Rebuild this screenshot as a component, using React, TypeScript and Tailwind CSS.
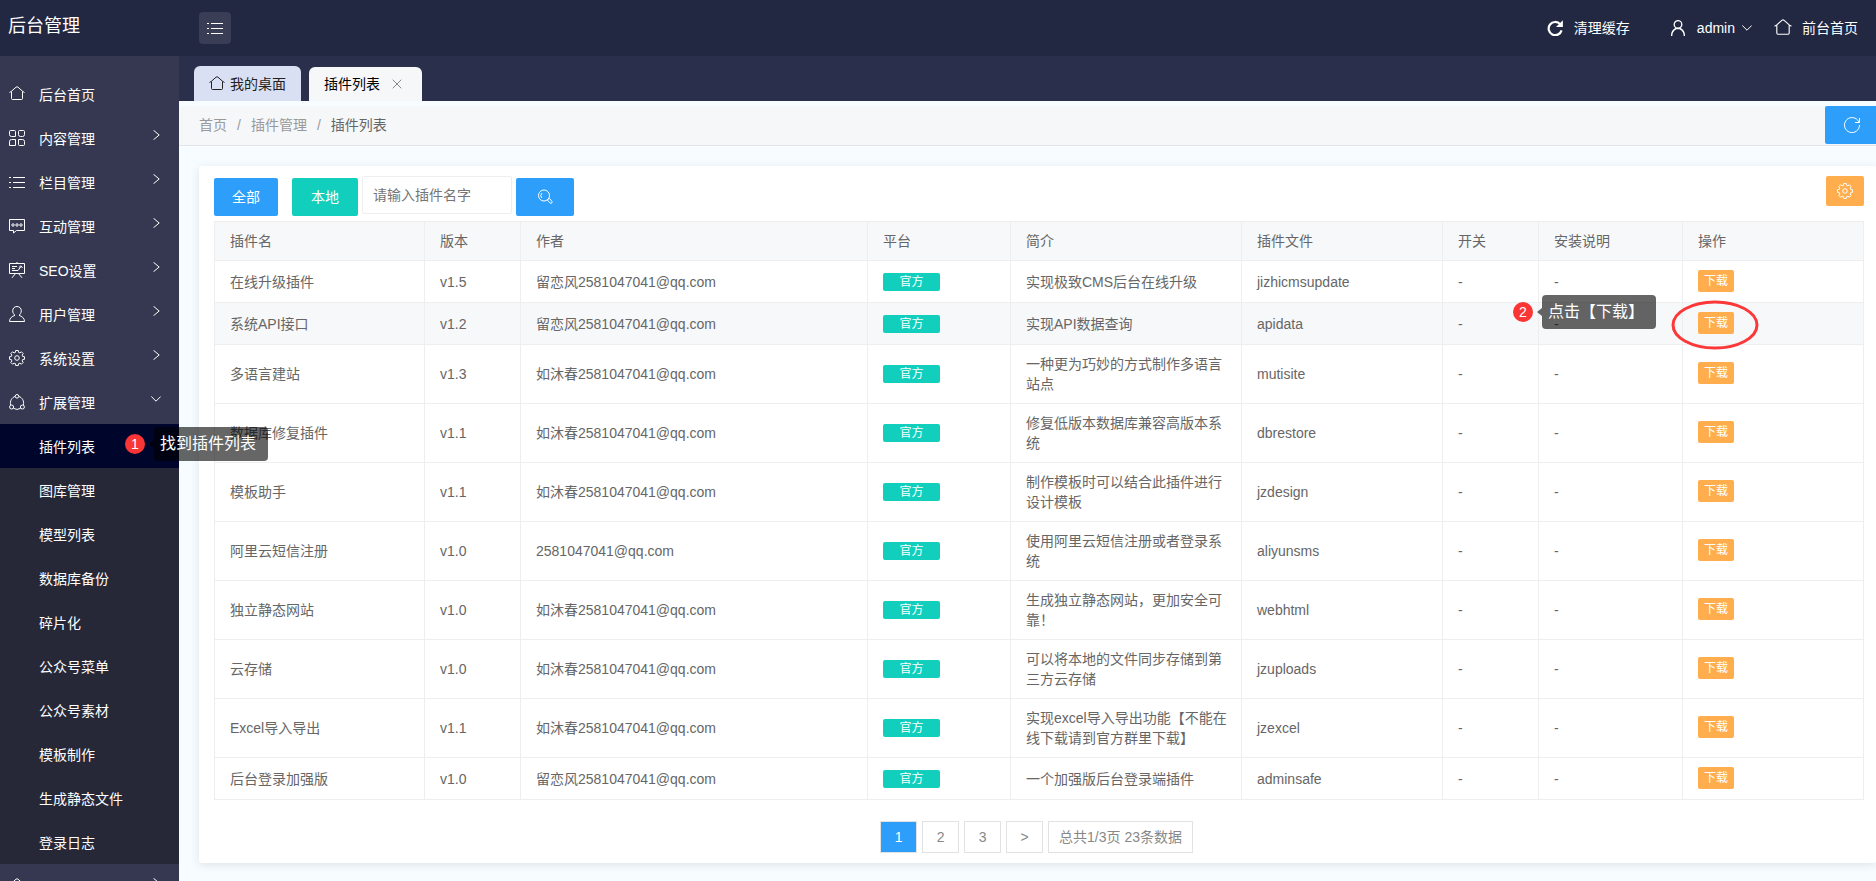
import React from 'react';

type IconProps = { className?: string };

const Svg = ({ className = 'size-4', children }: IconProps & { children: React.ReactNode }) => (
  <svg viewBox="0 0 16 16" className={`shrink-0 ${className}`} fill="none" stroke="currentColor" strokeWidth="1" aria-hidden="true">
    {children}
  </svg>
);

const HomeIcon = ({ className }: IconProps) => (
  <Svg className={className}>
    <path d="M.5 6.5 L2.5 5.2 L7 1.2 Q8 .4 9 1.2 L13.5 5.2 L15.5 6.5 M2.5 5.5 V12.5 Q2.5 13.5 3.5 13.5 H12.5 Q13.5 13.5 13.5 12.5 V5.5" />
  </Svg>
);

const GridIcon = ({ className }: IconProps) => (
  <Svg className={className}>
    <path d="M1.5 .5 H5.5 Q6.5 .5 6.5 1.5 V6.5 H2.5 Q.5 6.5 .5 4.5 V1.5 Q.5 .5 1.5 .5 Z" />
    <path d="M10.5 .5 H14.5 Q15.5 .5 15.5 1.5 V4.5 Q15.5 6.5 13.5 6.5 H11.5 Q9.5 6.5 9.5 4.5 V1.5 Q9.5 .5 10.5 .5 Z" />
    <path d="M2.5 9.5 H6.5 V15.5 H.5 V11.5 Q.5 9.5 2.5 9.5 Z" />
    <path d="M9.5 9.5 H13.5 Q15.5 9.5 15.5 11.5 V14.5 Q15.5 15.5 14.5 15.5 H10.5 Q9.5 15.5 9.5 14.5 Z" />
  </Svg>
);

const ListIcon = ({ className }: IconProps) => (
  <Svg className={className}>
    <path d="M0 3.5 H2 M4 3.5 H16 M0 8.5 H2 M4 8.5 H16 M0 13.5 H2 M4 13.5 H16" />
  </Svg>
);

const MessageIcon = ({ className }: IconProps) => (
  <Svg className={className}>
    <path d="M.5 1.5 H15.5 V12.5 H7.5 L4.5 15 V12.5 H.5 Z" />
    <circle cx="4" cy="7" r="1.2" />
    <circle cx="8" cy="7" r="1.2" />
    <circle cx="12" cy="7" r="1.2" />
  </Svg>
);

const BoardIcon = ({ className }: IconProps) => (
  <Svg className={className}>
    <path d="M.5 1.5 H15.5 V11.5 H.5 Z M8 0 V1.5 M3 4.5 H8 M3 6.5 H6 M3 8.5 H9 L12 4.5 M9.8 5.5 L12 3.8 L13.5 6 M6.5 11.5 L3 15.8 M9.5 11.5 L13 15.8" />
  </Svg>
);

const UserIcon = ({ className }: IconProps) => (
  <Svg className={className}>
    <path d="M8 .5 C10.5 .5 12.3 2.3 12.3 4.8 C12.3 6.8 11.3 8.3 10 9.3 C13 10.5 15.5 12 15.5 15.5 H.5 C.5 12 3 10.5 6 9.3 C4.7 8.3 3.7 6.8 3.7 4.8 C3.7 2.3 5.5 .5 8 .5 Z" />
  </Svg>
);

const polar = (r: number, deg: number) => {
  const a = (deg * Math.PI) / 180;
  return `${(8 + r * Math.sin(a)).toFixed(2)} ${(8 - r * Math.cos(a)).toFixed(2)}`;
};

// eight teeth around the rim
const gearRim = [0, 45, 90, 135, 180, 225, 270, 315]
  .map((a) => `${polar(7.6, a - 10)} L${polar(7.6, a + 10)} L${polar(5.9, a + 15)} L${polar(5.9, a + 30)}`)
  .join(' L');

const GearIcon = ({ className }: IconProps) => (
  <Svg className={className}>
    <path d={`M${gearRim} Z`} strokeLinejoin="round" />
    <circle cx="8" cy="8" r="2.3" />
  </Svg>
);

const ExtendIcon = ({ className }: IconProps) => (
  <Svg className={className}>
    <circle cx="8" cy="2.3" r="1.8" />
    <circle cx="2.6" cy="13" r="2" />
    <circle cx="13.4" cy="13" r="2" />
    <path d="M6.2 2.4 C2.6 3.6 .8 7 1.6 11 M9.8 2.4 C13.4 3.6 15.2 7 14.4 11 M4.4 14.4 Q8 16.4 11.6 14.4" />
  </Svg>
);

const AccountIcon = ({ className }: IconProps) => (
  <Svg className={className}>
    <circle cx="8" cy="4.4" r="3.8" strokeWidth="1.3" />
    <path d="M1.6 16 C1.6 12.5 3 10 6 8.5 H10 C13 10 14.4 12.5 14.4 16" strokeWidth="1.4" />
  </Svg>
);

const CleanIcon = ({ className }: IconProps) => (
  <Svg className={className}>
    <path d="M13.2 4.2 A6.6 6.6 0 1 0 14.6 10.4" strokeWidth="2.2" />
    <path d="M15.9 .2 V7 H9 Z" fill="currentColor" stroke="none" />
  </Svg>
);

const ReloadIcon = ({ className }: IconProps) => (
  <Svg className={className}>
    <path d="M15.5 8 A7.5 7.5 0 1 1 13.8 3.3 L15 5 M15.5 1 V5.5 H11" />
  </Svg>
);

const SearchIcon = ({ className }: IconProps) => (
  <Svg className={className}>
    <circle cx="7" cy="6.5" r="5.5" />
    <path d="M4.8 9 A3.6 3.6 0 0 1 4.8 4.2" />
    <path d="M11 10 L12.4 9.4 L15 12.4 Q15.4 14.6 13.4 14.3 L10.4 11.2 Z" />
  </Svg>
);

const Chevron = ({ open = false }: { open?: boolean }) => (
  <svg viewBox="0 0 10 10" className="size-2.5 shrink-0" fill="none" stroke="currentColor" aria-hidden="true">
    <path d={open ? 'M.3 2.5 L5 7.2 L9.7 2.5' : 'M2.5 .3 L8.2 5 L2.5 9.7'} />
  </svg>
);

const menu = [
  { label: '后台首页', icon: HomeIcon },
  { label: '内容管理', icon: GridIcon, arrow: true },
  { label: '栏目管理', icon: ListIcon, arrow: true },
  { label: '互动管理', icon: MessageIcon, arrow: true },
  { label: 'SEO设置', icon: BoardIcon, arrow: true },
  { label: '用户管理', icon: UserIcon, arrow: true },
  { label: '系统设置', icon: GearIcon, arrow: true },
  { label: '扩展管理', icon: ExtendIcon, arrow: true, open: true },
];

const submenu = ['插件列表', '图库管理', '模型列表', '数据库备份', '碎片化', '公众号菜单', '公众号素材', '模板制作', '生成静态文件', '登录日志'];

const headings = ['插件名', '版本', '作者', '平台', '简介', '插件文件', '开关', '安装说明', '操作'];

const plugins = [
  { name: '在线升级插件', version: 'v1.5', author: '留恋风2581047041@qq.com', desc: '实现极致CMS后台在线升级', file: 'jizhicmsupdate' },
  { name: '系统API接口', version: 'v1.2', author: '留恋风2581047041@qq.com', desc: '实现API数据查询', file: 'apidata', marked: true },
  { name: '多语言建站', version: 'v1.3', author: '如沐春2581047041@qq.com', desc: '一种更为巧妙的方式制作多语言站点', file: 'mutisite' },
  { name: '数据库修复插件', version: 'v1.1', author: '如沐春2581047041@qq.com', desc: '修复低版本数据库兼容高版本系统', file: 'dbrestore' },
  { name: '模板助手', version: 'v1.1', author: '如沐春2581047041@qq.com', desc: '制作模板时可以结合此插件进行设计模板', file: 'jzdesign' },
  { name: '阿里云短信注册', version: 'v1.0', author: '2581047041@qq.com', desc: '使用阿里云短信注册或者登录系统', file: 'aliyunsms' },
  { name: '独立静态网站', version: 'v1.0', author: '如沐春2581047041@qq.com', desc: '生成独立静态网站，更加安全可靠！', file: 'webhtml' },
  { name: '云存储', version: 'v1.0', author: '如沐春2581047041@qq.com', desc: '可以将本地的文件同步存储到第三方云存储', file: 'jzuploads' },
  { name: 'Excel导入导出', version: 'v1.1', author: '如沐春2581047041@qq.com', desc: '实现excel导入导出功能【不能在线下载请到官方群里下载】', file: 'jzexcel' },
  { name: '后台登录加强版', version: 'v1.0', author: '留恋风2581047041@qq.com', desc: '一个加强版后台登录端插件', file: 'adminsafe' },
];

// numbered step marker with a speech label on its right
const Callout = ({ step, text }: { step: number; text: string }) => (
  <div className="flex items-center whitespace-nowrap text-white">
    <span className="flex size-5 items-center justify-center rounded-full bg-[#fa3536] text-sm leading-5">{step}</span>
    <span className="ml-1 border-y-4 border-r-5 border-y-transparent border-r-black/60" />
    <span className="h-[34px] w-[114px] rounded-sm bg-black/60 pl-1.5 text-base leading-[34px]">{text}</span>
  </div>
);

const Sidebar = () => (
  <nav className="relative z-10 w-[179px] shrink-0 bg-[#353850] pt-4 text-sm text-white">
    {menu.map(({ label, icon: Icon, arrow, open }) => (
      <a key={label} href="#" className="flex h-11 items-center pl-[9px] pr-[18px]">
        <Icon className="size-4" />
        <span className="ml-3.5 flex-1 pt-0.5">{label}</span>
        {arrow && <span className="pb-1.5"><Chevron open={open} /></span>}
      </a>
    ))}
    <div className="bg-[#262838]">
      {submenu.map((label, i) => (
        <div key={label} className={i === 0 ? 'relative bg-[#00062b]' : ''}>
          <a href="#" className="flex h-11 items-center pl-[39px] pt-0.5">{label}</a>
          {i === 0 && (
            <div className="absolute left-[125px] top-[3px]">
              <Callout step={1} text="找到插件列表" />
            </div>
          )}
        </div>
      ))}
    </div>
    <a href="#" aria-label="更多" className="flex h-11 items-center justify-between pl-[9px] pr-[18px]">
      <HomeIcon className="size-4" />
      <span className="pb-1.5"><Chevron /></span>
    </a>
  </nav>
);

const Header = () => (
  <header className="flex h-14 shrink-0 items-center bg-[#222842] text-sm text-white">
    <h1 className="w-[199px] pb-1 pl-2 text-lg leading-7">后台管理</h1>
    <button type="button" aria-label="折叠菜单" className="flex size-8 items-center justify-center rounded-sm bg-[#3a3d56]">
      <ListIcon className="size-4" />
    </button>
    <div className="ml-auto flex items-center pr-[18px]">
      <a href="#" className="flex items-center">
        <CleanIcon className="size-4" />
        <span className="ml-[11px]">清理缓存</span>
      </a>
      <button type="button" className="ml-10 flex items-center">
        <AccountIcon className="size-4" />
        <span className="ml-[11px] mr-[7px]">admin</span>
        <Chevron open />
      </button>
      <a href="#" className="ml-[22px] flex items-center">
        <HomeIcon className="size-[18px]" />
        <span className="ml-2.5">前台首页</span>
      </a>
    </div>
  </header>
);

const PluginTable = () => (
  <table className="w-full table-fixed border-collapse text-left text-sm leading-5 text-[#666]">
    <colgroup>
      <col className="w-[210px]" />
      <col className="w-[96px]" />
      <col />
      <col className="w-[143px]" />
      <col className="w-[231px]" />
      <col className="w-[201px]" />
      <col className="w-[96px]" />
      <col className="w-[144px]" />
      <col className="w-[181px]" />
    </colgroup>
    <thead>
      <tr className="bg-[#f7f8fa]">
        {headings.map((h) => (
          <th key={h} className="border border-[#eee] px-[15px] py-[9px] font-normal">{h}</th>
        ))}
      </tr>
    </thead>
    <tbody>
      {plugins.map((p) => (
        <tr key={p.file} className={p.marked ? 'h-[42px] bg-[#f7f8fa]' : 'h-[42px]'}>
          <td className="border border-[#eee] px-[15px]">{p.name}</td>
          <td className="border border-[#eee] px-[15px]">{p.version}</td>
          <td className="border border-[#eee] px-[15px]">{p.author}</td>
          <td className="border border-[#eee] px-[15px]">
            <span className="block h-[18px] w-[57px] rounded-xs bg-[#11cfbc] text-center text-xs leading-[18px] text-white">官方</span>
          </td>
          <td className="border border-[#eee] py-[9px] pl-[15px] pr-3">{p.desc}</td>
          <td className="border border-[#eee] px-[15px]">{p.file}</td>
          <td className="border border-[#eee] px-[15px]">-</td>
          <td className="border border-[#eee] px-[15px]">-</td>
          <td className="border border-[#eee] px-[15px] pb-0.5">
            <div className="relative w-9">
              <button type="button" className="block h-[22px] w-9 rounded-xs bg-[#ffad4d] text-xs text-white">下载</button>
              {p.marked && (
                <>
                  <svg viewBox="0 0 90 52" className="pointer-events-none absolute -left-7 -top-3.5 h-[52px] w-[90px] max-w-none" fill="none" aria-hidden="true">
                    <ellipse cx="45" cy="27" rx="42" ry="23" stroke="#fd3838" strokeWidth="3" />
                  </svg>
                  <div className="absolute -top-[17px] right-full mr-[42px]">
                    <Callout step={2} text="点击【下载】" />
                  </div>
                </>
              )}
            </div>
          </td>
        </tr>
      ))}
    </tbody>
  </table>
);

const pageBox = 'flex h-8 items-center justify-center border border-[#e2e2e2]';

const App = () => (
  <div className="flex h-screen flex-col overflow-hidden bg-[#f6fcff] [font-family:'Liberation_Sans','Noto_Sans_CJK_SC',sans-serif]">
    <Header />
    <div className="flex min-h-0 flex-1">
      <Sidebar />
      <main className="min-w-0 flex-1">
        <div className="flex h-[45px] items-end gap-2 bg-[#2a2f4c] pl-[15px] text-sm">
          <a href="#" className="flex h-[35px] items-center gap-[5px] rounded-t-md bg-[#d9e0f3] px-[15px] text-[#222]">
            <HomeIcon className="size-4" />
            我的桌面
          </a>
          <div className="flex h-[34px] items-center rounded-t-md bg-[#f6f7f9] pl-[15px] pr-5 text-black">
            <a href="#">插件列表</a>
            <button type="button" aria-label="关闭" className="ml-3 text-[#888]">
              <svg viewBox="0 0 10 10" className="size-2.5" fill="none" stroke="currentColor" aria-hidden="true">
                <path d="M.7 .7 L9.3 9.3 M9.3 .7 L.7 9.3" />
              </svg>
            </button>
          </div>
        </div>

        <div className="mt-[5px] flex h-10 items-start justify-between border-b border-[#e3e4e8] bg-[#f6f7f9]">
          <div className="pl-5 text-sm leading-[38px] text-[#999]">
            <a href="#">首页</a>
            <span className="mx-2.5">/</span>
            <a href="#">插件管理</a>
            <span className="mx-2.5">/</span>
            <a href="#" className="text-[#666]">插件列表</a>
          </div>
          <button type="button" aria-label="刷新" className="flex h-[38px] w-[51px] items-center justify-center rounded-l-xs bg-[#2d9ffa] pl-0.5 text-white">
            <ReloadIcon className="size-4" />
          </button>
        </div>

        <section className="ml-5 mt-5 rounded-xs bg-white pb-2.5 pt-2.5 shadow-[0_2px_10px_rgba(0,0,0,0.1)]">
          <div className="pl-[15px] pr-3">
            <div className="flex h-[45px] items-start text-sm">
              <button type="button" className="mt-0.5 h-[38px] w-16 rounded-xs bg-[#2d9ffa] text-white">全部</button>
              <button type="button" className="ml-3.5 mt-0.5 h-[38px] w-[66px] rounded-xs bg-[#11cfbc] text-white">本地</button>
              <input
                type="text"
                aria-label="插件名字"
                placeholder="请输入插件名字"
                className="ml-1 h-[38px] w-[150px] rounded-xs border border-[#eee] bg-white px-2.5 placeholder:text-[#757575]"
              />
              <button type="button" aria-label="搜索" className="ml-1 mt-0.5 flex h-[38px] w-[58px] items-center justify-center rounded-xs bg-[#2d9ffa] text-white">
                <SearchIcon className="size-4" />
              </button>
              <button type="button" aria-label="设置" className="ml-auto flex h-[30px] w-[38px] items-center justify-center rounded-xs bg-[#ffad4d] text-white">
                <GearIcon className="size-4" />
              </button>
            </div>
            <PluginTable />
          </div>

          <div className="mt-[21px] flex justify-center gap-[5px] pr-0.5 text-sm text-[#888]">
            <a href="#" className={`${pageBox} w-[37px] bg-[#2d9ffa] text-white`}>1</a>
            <a href="#" className={`${pageBox} w-[37px]`}>2</a>
            <a href="#" className={`${pageBox} w-[37px]`}>3</a>
            <a href="#" className={`${pageBox} w-[37px]`}>&gt;</a>
            <span className={`${pageBox} px-2.5`}>总共1/3页 23条数据</span>
          </div>
        </section>
      </main>
    </div>
  </div>
);

export default App;
